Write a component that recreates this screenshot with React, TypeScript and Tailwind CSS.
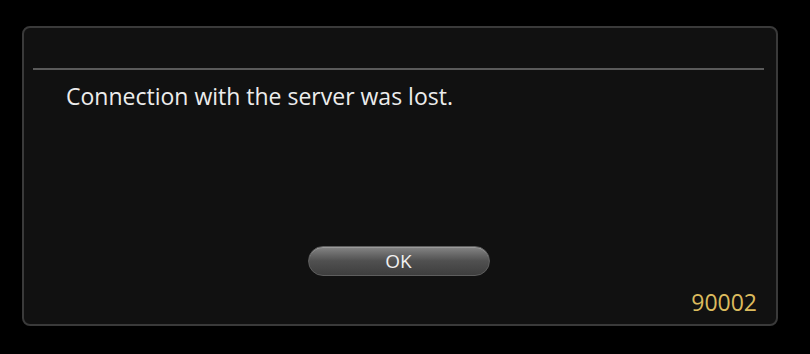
export default function App() {
  return (
    <div className="w-[810px] h-[354px] bg-black pl-[22px] pr-[32px] pt-[26px] pb-[28px] font-['Open_Sans',sans-serif]">
      <div className="h-full rounded-[8px] border-2 border-[#3a3a3a] bg-[#111111] pl-[9px] pr-[12px] pt-[40px] flex flex-col">
        <div className="h-[2px] bg-[#5a5a5a]" />
        <p className="mt-[10px] pl-[33px] text-[23px] leading-[32px] text-[#ececec]">
          Connection with the server was lost.
        </p>
        <div className="mt-[134px] flex justify-center">
          <button className="w-[182px] h-[30px] rounded-full border border-[#5e5e5e] bg-gradient-to-b from-[#858585] via-[#505050] to-[#3e3e3e] text-[19px] leading-none text-[#f0f0f0] shadow-[inset_0_1px_0_rgba(255,255,255,0.2)]">
            OK
          </button>
        </div>
        <div className="mt-[12px] pr-[7px] text-right text-[23px] leading-[28px] text-[#dcbb5e]">
          90002
        </div>
      </div>
    </div>
  );
}
